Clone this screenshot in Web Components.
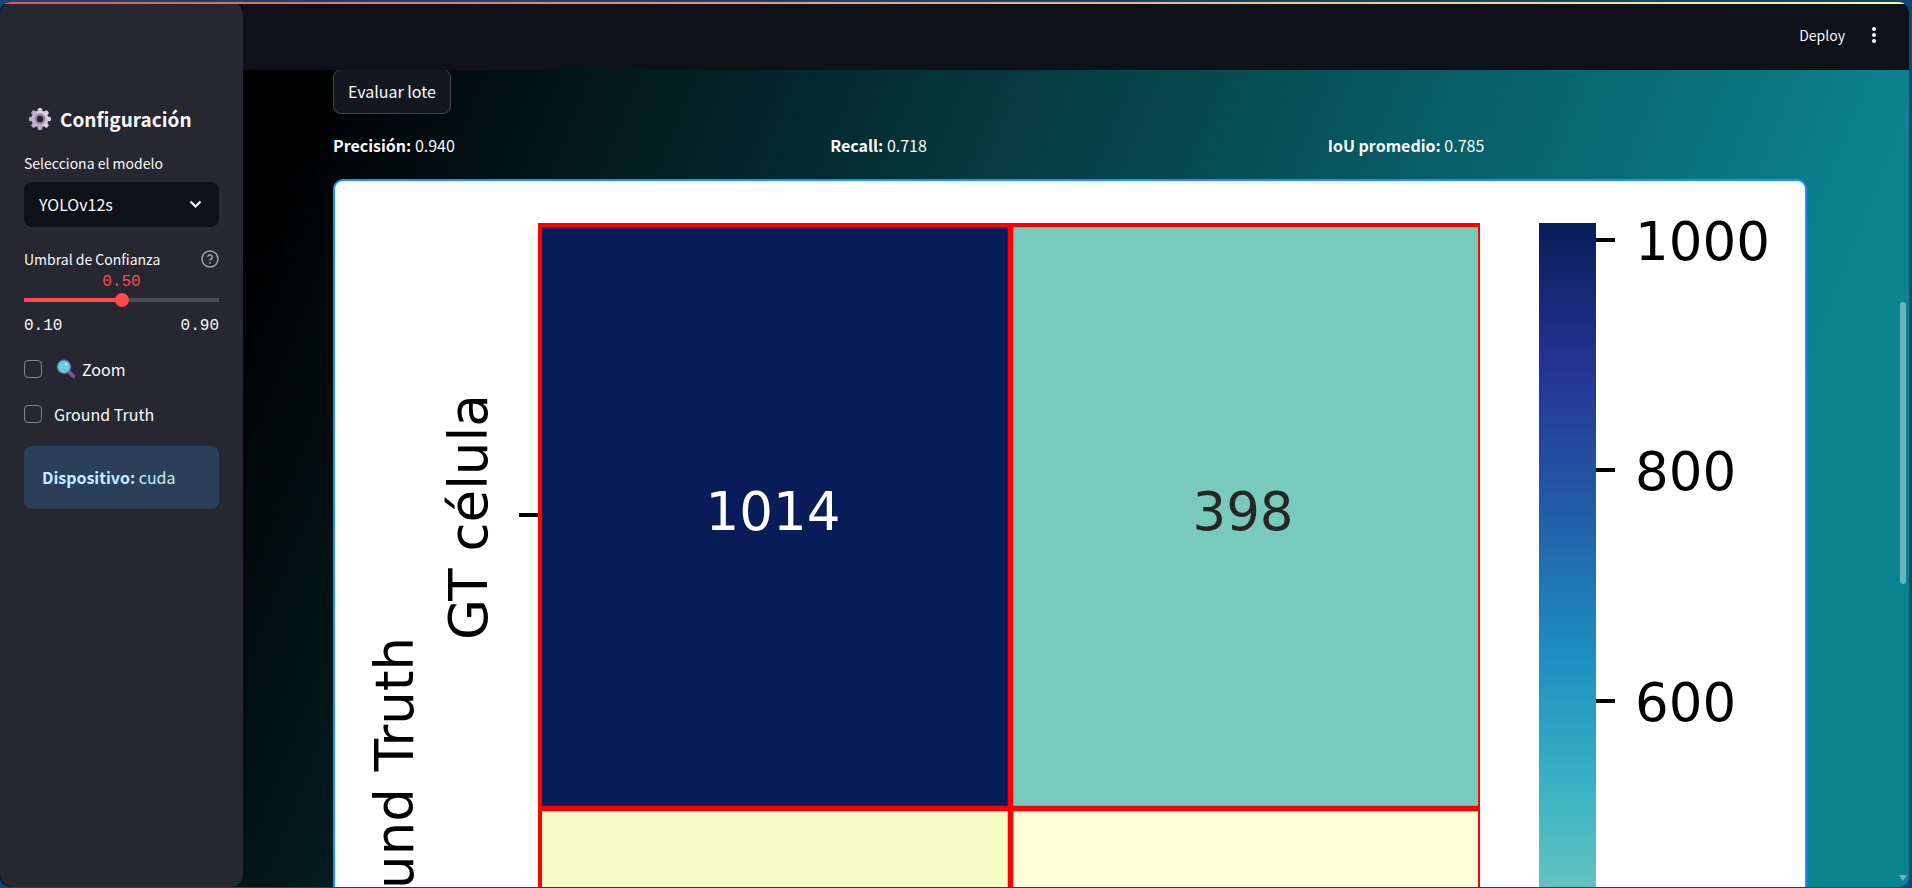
<!DOCTYPE html>
<html lang="es"><head><meta charset="utf-8"><title>Evaluación</title>
<style>
html,body{height:100%;margin:0}
body{overflow:hidden;background:#0b4879;font-family:"Noto Sans CJK SC","Noto Sans",sans-serif;color:#fafafa}
</style></head><body>
<app-shell>
  <side-panel slot="side"></side-panel>
  <top-bar slot="top"></top-bar>
  <batch-results slot="main"></batch-results>
</app-shell>
<script>
const define=(name,html)=>customElements.define(name,class extends HTMLElement{
  constructor(){super();const t=document.createElement('template');t.innerHTML=html;this.attachShadow({mode:'open'}).append(t.content.cloneNode(true));}
});

define('app-shell',`<style>
:host{display:block;box-sizing:border-box;height:100%;padding:2px 3px 1px 0}
.frame{position:relative;display:flex;height:100%;border-radius:10px;overflow:hidden;background:linear-gradient(112deg,#000 15%,#0b8491 87%)}
.line{position:absolute;z-index:3;top:0;left:0;right:0;height:2px;background:linear-gradient(to right,#ff4b4b,#fffd80)}
.side{position:relative;z-index:1;flex:0 0 243px;background:#262730;border-radius:12px}
.col{position:relative;flex:1;min-width:0;display:flex;flex-direction:column}
.main{flex:1;min-height:0;overflow:hidden}
.thumb{position:absolute;right:3px;top:300px;width:6px;height:282px;border-radius:3px;background:#6db5bd}
.arrow{position:absolute;right:2px;bottom:6px;border:4px solid transparent;border-top:6px solid #6db5bd;border-bottom:0}
</style>
<div class="frame"><div class="line"></div>
<aside class="side"><slot name="side"></slot></aside>
<div class="col"><slot name="top"></slot><main class="main"><slot name="main"></slot></main>
<div class="thumb"></div><div class="arrow"></div></div></div>`);

define('top-bar',`<style>
:host{display:block;flex:none}
header{display:flex;align-items:center;justify-content:flex-end;gap:22px;height:68px;padding:0 28px 2px 0;background:#0e1117;box-sizing:border-box}
button{all:unset;font-size:14px;line-height:20px;cursor:pointer}
svg{display:block}
</style><header><button>Deploy</button><button aria-label="Menú"><svg width="14" height="18" viewBox="0 0 14 18" fill="#fafafa"><circle cx="7" cy="3" r="2"/><circle cx="7" cy="9" r="2"/><circle cx="7" cy="15" r="2"/></svg></button></header>`);

define('check-row',`<style>
:host{display:block}
label{display:flex;align-items:center;gap:12px;font-size:16px;line-height:24px}
input{appearance:none;box-sizing:border-box;width:18px;height:18px;margin:0;border:1px solid #81828a;border-radius:4px}
span{display:flex;align-items:center;gap:6px}
::slotted(svg){margin-left:2px}
</style><label><input type="checkbox"><span><slot></slot></span></label>`);

define('info-note',`<style>
:host{display:block;padding:19px 18px 20px;border-radius:8px;background:#2a3f5a;color:#c7ebff;font-size:16px;line-height:24px}
</style><slot></slot>`);

define('side-panel',`<style>
:host{display:block;padding:102px 24px 0}
h2{display:flex;align-items:center;gap:8px;margin:0 0 17px 4px;font-size:19px;line-height:30px;font-weight:700}
h2 svg{display:block}
.lab{display:flex;justify-content:space-between;align-items:center;font-size:14px;line-height:24px}
.pick{display:grid;margin:7px 0 20px}
.pick>*{grid-area:1/1}
select{appearance:none;border:0;border-radius:8px;background:#0e1117;color:#fafafa;font:16px "Noto Sans CJK SC",sans-serif;height:45px;padding:0 15px 2px}
.pick svg{justify-self:end;align-self:center;margin-right:17px;pointer-events:none}
output{display:block;text-align:center;color:#ff4b4b}
.mono{font:16px/22px "Liberation Mono",monospace}
input{appearance:none;display:block;width:100%;height:14px;margin:0 0 2px;background:linear-gradient(#ff4b4b,#ff4b4b) 0 5px/50% 4px no-repeat,linear-gradient(#4b4c57,#4b4c57) 0 5px/100% 4px no-repeat}
input::-webkit-slider-thumb{appearance:none;width:14px;height:14px;border-radius:50%;background:#ff4b4b}
.ends{display:flex;justify-content:space-between;margin:8px 0 20px}
check-row{margin-bottom:21px}
check-row:last-of-type{margin-bottom:20px}
</style>
<h2><svg width="24" height="24" viewBox="0 0 24 24"><defs><linearGradient id="g" x1="0" y1="0" x2="0" y2="1"><stop offset="0" stop-color="#dcd0e6"/><stop offset="1" stop-color="#b9a9cf"/></linearGradient></defs><g fill="url(#g)"><circle cx="12" cy="12" r="8.5"/><rect x="9.7" y="1" width="4.6" height="22" rx="1.6"/><rect x="9.7" y="1" width="4.6" height="22" rx="1.6" transform="rotate(45 12 12)"/><rect x="9.7" y="1" width="4.6" height="22" rx="1.6" transform="rotate(90 12 12)"/><rect x="9.7" y="1" width="4.6" height="22" rx="1.6" transform="rotate(135 12 12)"/></g><circle cx="12" cy="12" r="5.4" fill="#93859f"/><circle cx="12" cy="12" r="3.2" fill="#262730"/></svg>Configuración</h2>
<label class="lab" for="m">Selecciona el modelo</label>
<div class="pick"><select id="m"><option>YOLOv12s</option></select><svg width="13" height="9" viewBox="0 0 13 9" fill="none" stroke="#fafafa" stroke-width="2.2"><path d="M1.5 1.5l5 5 5-5"/></svg></div>
<div class="lab"><label for="r">Umbral de Confianza</label><svg width="18" height="18" viewBox="0 0 18 18" fill="none" stroke="#a3a4aa" stroke-width="1.5"><circle cx="9" cy="9" r="8"/><path d="M6.8 7a2.2 2.2 0 1 1 3.3 2c-.8.5-1.1.8-1.1 1.6"/><path d="M9 12v1.8"/></svg></div>
<output class="mono" for="r">0.50</output>
<input id="r" type="range" min="0.1" max="0.9" step="0.01" value="0.5">
<div class="ends mono"><span>0.10</span><span>0.90</span></div>
<check-row><svg width="20" height="20" viewBox="0 0 20 20"><path d="M12.5 12.5l4.8 4.6" stroke="#8a4b92" stroke-width="4" stroke-linecap="round"/><circle cx="8" cy="7.8" r="6.6" fill="#63cdea" stroke="#4c78b4" stroke-width="1.3"/><circle cx="10" cy="5" r="1.2" fill="#d8f6ff"/></svg>Zoom</check-row>
<check-row>Ground Truth</check-row>
<info-note><b>Dispositivo:</b> cuda</info-note>`);

define('heat-map',`<style>
:host{display:block;box-sizing:border-box;border:2px solid #1e90ff;border-radius:10px;background:#fff;overflow:hidden}
svg{display:block;width:100%;height:auto}
text{font-family:"DejaVu Sans",sans-serif;font-size:53px}
</style>
<svg viewBox="335 181 1470 1100" role="img" aria-label="Matriz de confusión">
<defs><linearGradient id="c" gradientUnits="userSpaceOnUse" x1="0" y1="223" x2="0" y2="1391"><stop offset="0" stop-color="#081d58"/><stop offset=".125" stop-color="#253494"/><stop offset=".25" stop-color="#225ea8"/><stop offset=".375" stop-color="#1d91c0"/><stop offset=".5" stop-color="#41b6c4"/><stop offset=".625" stop-color="#7fcdbb"/><stop offset=".75" stop-color="#c7e9b4"/><stop offset=".875" stop-color="#edf8b1"/><stop offset="1" stop-color="#ffffd9"/></linearGradient></defs>
<rect x="540" y="225" width="470" height="583" fill="#081d58"/><rect x="1010" y="225" width="469" height="583" fill="#78cabc"/>
<rect x="540" y="808" width="470" height="583" fill="#f5fbc4"/><rect x="1010" y="808" width="469" height="583" fill="#ffffd9"/>
<g fill="none" stroke="#f00"><path d="M538 225H1480" stroke-width="4"/><path d="M540 223V1391" stroke-width="4"/><path d="M1479 223V1391" stroke-width="2"/><path d="M1010.500 223V1391M538 808.500H1480" stroke-width="5.500"/></g>
<g stroke="#000" stroke-width="4"><path d="M519 515H538M1596 240H1615M1596 470H1615M1596 701H1615"/></g>
<rect x="1539" y="223" width="57" height="1168" fill="url(#c)"/>
<text x="773" y="530" text-anchor="middle" fill="#fff">1014</text><text x="1243" y="530" text-anchor="middle" fill="#262626">398</text>
<text x="1635" y="260">1000</text><text x="1635" y="490">800</text><text x="1635" y="721">600</text>
<text transform="translate(487 640) rotate(-90)">GT célula</text><text transform="translate(413 983) rotate(-90)">Ground Truth</text>
</svg>`);

define('batch-results',`<style>
:host{display:block;padding:0 102px 0 90px}
button{box-sizing:border-box;display:block;height:45px;margin:-1px 0 0;padding:0 14px 2px;border:1px solid #41444c;border-radius:8px;background:#131720;color:#fafafa;font:16px "Noto Sans CJK SC",sans-serif}
.metrics{display:grid;grid-template-columns:repeat(3,1fr);gap:18px;margin:19px 0 22px;font-size:16px;line-height:24px}
p{margin:0}
</style><button>Evaluar lote</button>
<div class="metrics"><p><b>Precisión:</b> 0.940</p><p><b>Recall:</b> 0.718</p><p><b>IoU promedio:</b> 0.785</p></div>
<heat-map></heat-map>`);
</script></body></html>
